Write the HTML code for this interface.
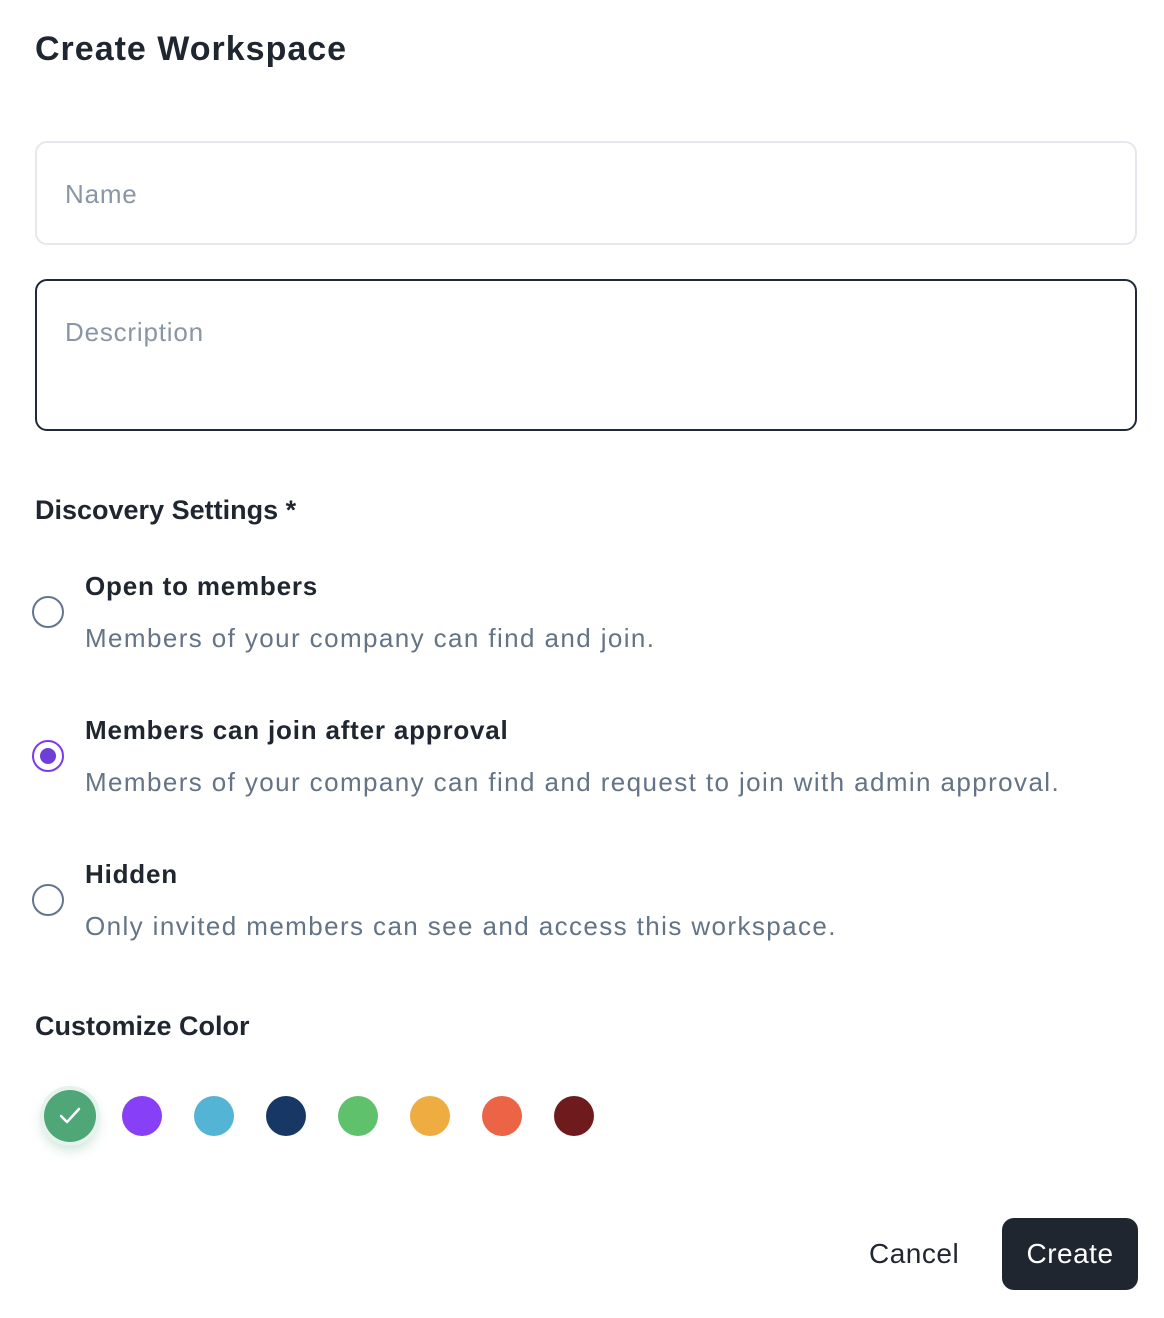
<!DOCTYPE html>
<html><head><style>
body{margin:0;width:1164px;height:1318px;background:#fff;font-family:"Liberation Sans",sans-serif;position:relative;overflow:hidden;color:#1f2630}
.a{position:absolute}
h1{position:absolute;left:35px;top:30px;margin:0;font-size:34px;font-weight:bold;color:#1f2630;letter-spacing:1px}
.box{position:absolute;left:35px;width:1102px;box-sizing:border-box;border-radius:12px}
.ph{position:absolute;left:28px;font-size:26px;color:#8a96a6;letter-spacing:.8px}
.lbl{font-size:26px;font-weight:bold;color:#1f2630;letter-spacing:.8px}
.desc{font-size:26px;color:#647386;letter-spacing:1.4px}
.radio{position:absolute;left:32px;width:32px;height:32px;box-sizing:border-box;border:2px solid #64748b;border-radius:50%}
.dot{position:absolute;width:40px;height:40px;border-radius:50%;top:1096px}
</style></head><body>
<h1>Create Workspace</h1>
<div class="box" style="top:141px;height:104px;border:2px solid #e5e8ee"><div class="ph" style="top:36px">Name</div></div>
<div class="box" style="top:279px;height:152px;border:2px solid #1f2937"><div class="ph" style="top:36px">Description</div></div>
<div class="a lbl" style="left:35px;top:495px;font-size:27px;letter-spacing:0">Discovery Settings *</div>

<div class="radio" style="top:596px"></div>
<div class="a lbl" style="left:85px;top:571px">Open to members</div>
<div class="a desc" style="left:85px;top:623px">Members of your company can find and join.</div>

<div class="radio" style="top:740px;border-color:#7c3aed"><div class="a" style="left:6px;top:6px;width:16px;height:16px;border-radius:50%;background:#6d3fd8"></div></div>
<div class="a lbl" style="left:85px;top:715px">Members can join after approval</div>
<div class="a desc" style="left:85px;top:767px">Members of your company can find and request to join with admin approval.</div>

<div class="radio" style="top:884px"></div>
<div class="a lbl" style="left:85px;top:859px">Hidden</div>
<div class="a desc" style="left:85px;top:911px">Only invited members can see and access this workspace.</div>

<div class="a lbl" style="left:35px;top:1011px;font-size:27px;letter-spacing:0">Customize Color</div>
<div class="a" style="left:44px;top:1090px;width:52px;height:52px;border-radius:50%;background:#4fa677;box-shadow:0 0 0 4px #e6f2ec,0 6px 14px rgba(79,166,119,.4)">
<svg width="52" height="52" viewBox="0 0 52 52" style="position:absolute;left:0;top:0"><path d="M17 26l6 6 12-13" fill="none" stroke="#fff" stroke-width="2.5" stroke-linecap="round" stroke-linejoin="round"/></svg></div>
<div class="dot" style="left:122px;background:#8740f5"></div>
<div class="dot" style="left:194px;background:#54b4d6"></div>
<div class="dot" style="left:266px;background:#173865"></div>
<div class="dot" style="left:338px;background:#5fc16b"></div>
<div class="dot" style="left:410px;background:#efac41"></div>
<div class="dot" style="left:482px;background:#eb6445"></div>
<div class="dot" style="left:554px;background:#6f1a1d"></div>

<div class="a" style="left:869px;top:1238px;font-size:28px;color:#1f2630;letter-spacing:.5px">Cancel</div>
<div class="a" style="left:1002px;top:1218px;width:136px;height:72px;border-radius:12px;background:#1f2630;color:#fff;font-size:28px;line-height:72px;text-align:center;letter-spacing:.5px">Create</div>
</body></html>
